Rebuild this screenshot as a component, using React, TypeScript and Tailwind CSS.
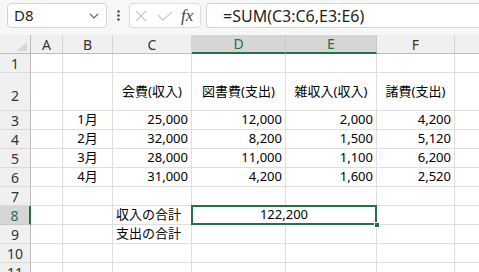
type Align = 'left' | 'center' | 'right';
type CellData = { text: string; align: Align };

const cols = ['A', 'B', 'C', 'D', 'E', 'F', 'G'];
const selectedCols = ['D', 'E'];

const c = (text: string): CellData => ({ text, align: 'center' });
const r = (text: string): CellData => ({ text, align: 'right' });
const l = (text: string): CellData => ({ text, align: 'left' });

// row number -> column letter -> content
const sheet: Record<number, Record<string, CellData>> = {
  2: { C: c('会費(収入)'), D: c('図書費(支出)'), E: c('雑収入(収入)'), F: c('諸費(支出)') },
  3: { B: c('1月'), C: r('25,000'), D: r('12,000'), E: r('2,000'), F: r('4,200') },
  4: { B: c('2月'), C: r('32,000'), D: r('8,200'), E: r('1,500'), F: r('5,120') },
  5: { B: c('3月'), C: r('28,000'), D: r('11,000'), E: r('1,100'), F: r('6,200') },
  6: { B: c('4月'), C: r('31,000'), D: r('4,200'), E: r('1,600'), F: r('2,520') },
  9: { C: l('支出の合計') },
};

const rows = [1, 2, 3, 4, 5, 6, 7, 8, 9, 10, 11];

function NameBox() {
  return (
    <div className="flex h-[25px] w-[100px] items-center justify-between rounded-[4px] border border-[#d4d4d4] bg-white pl-[6px] pr-[6px]">
      <span className="text-[15px] text-[#1f1f1f]">D8</span>
      <svg width="10" height="6" viewBox="0 0 10 6" className="mr-[1px]">
        <polyline points="1,1 5,5 9,1" fill="none" stroke="#666" strokeWidth="1.2" />
      </svg>
    </div>
  );
}

function FormulaBar() {
  return (
    <div className="flex h-[35px] items-start bg-[#f7f7f7] pt-[3px] pl-[7px]">
      <NameBox />
      <div className="flex h-[25px] w-[22px] items-center justify-center">
        <svg width="3" height="11" viewBox="0 0 3 11">
          <circle cx="1.5" cy="1.5" r="1.2" fill="#444" />
          <circle cx="1.5" cy="5.5" r="1.2" fill="#444" />
          <circle cx="1.5" cy="9.5" r="1.2" fill="#444" />
        </svg>
      </div>
      <div className="flex h-[25px] w-[72px] items-center rounded-[4px] border border-[#dcdcdc] bg-white pl-[5px]">
        <svg width="12" height="12" viewBox="0 0 12 12" className="mr-[10px]">
          <path d="M1 1 L11 11 M11 1 L1 11" stroke="#c6c6c6" strokeWidth="1.1" fill="none" />
        </svg>
        <svg width="16" height="10" viewBox="0 0 16 10" className="mr-[8px]">
          <polyline points="1,4 6,9 15,1" stroke="#c6c6c6" strokeWidth="1.1" fill="none" />
        </svg>
        <span className="text-[17px] italic text-[#444] [font-family:'Liberation_Serif',serif]">fx</span>
      </div>
      <div className="ml-[5px] flex h-[25px] flex-1 items-center rounded-l-[4px] border border-r-0 border-[#d4d4d4] bg-white pl-[16px]">
        <span className="text-[16px] text-[#1f1f1f]">=SUM(C3:C6,E3:E6)</span>
      </div>
    </div>
  );
}

function ColHeader({ col }: { col: string }) {
  const sel = selectedCols.includes(col);
  return (
    <div
      className={
        sel
          ? 'flex items-center justify-center border-r border-r-[#c8c8c8] border-b-2 border-b-[#217346] bg-[#d6d6d6] text-[14px] text-[#217346]'
          : 'flex items-center justify-center border-r border-r-[#d4d4d4] border-b border-b-[#bdbdbd] bg-[#f0f0f0] text-[14px] text-[#333]'
      }
    >
      {/* G sits past the window's right edge, its letter is not visible */}
      {col === 'G' ? '' : col}
    </div>
  );
}

function RowHeader({ n }: { n: number }) {
  const sel = n === 8;
  return (
    <div
      className={
        (n === 2 ? 'items-end pb-[4px] ' : 'items-center ') +
        (sel
          ? 'flex justify-center border-b border-b-[#c8c8c8] border-r-2 border-r-[#217346] bg-[#d6d6d6] text-[14px] text-[#217346]'
          : 'flex justify-center border-b border-b-[#d9d9d9] border-r border-r-[#bdbdbd] bg-[#f0f0f0] text-[14px] text-[#333]')
      }
    >
      {n}
    </div>
  );
}

function Cell({ data }: { data?: CellData }) {
  const align =
    data?.align === 'right' ? 'justify-end pr-[3px]' : data?.align === 'left' ? 'justify-start pl-[3px]' : 'justify-center';
  return (
    <div className={`flex items-center overflow-visible whitespace-nowrap border-r border-b border-[#dedede] bg-white text-[13px] text-black ${align}`}>
      {data?.text}
    </div>
  );
}

function RowCells({ n }: { n: number }) {
  return (
    <>
      <RowHeader n={n} />
      {cols.map((col) => (
        <Cell key={col} data={sheet[n]?.[col]} />
      ))}
    </>
  );
}

function Row8() {
  return (
    <>
      <RowHeader n={8} />
      <Cell />
      <Cell />
      <Cell data={l('収入の合計')} />
      <div className="relative col-span-2 flex items-center justify-center border-r border-b border-[#dedede] bg-white text-[13px] text-black">
        122,200
        <div className="absolute -top-[1px] -left-[1px] -right-[1px] -bottom-[1px] border-2 border-[#217346]" />
        <div className="absolute -right-[4px] -bottom-[4px] h-[6px] w-[6px] border border-white bg-[#217346]" />
      </div>
      <Cell />
      <Cell />
    </>
  );
}

function Sheet() {
  return (
    <div className="grid w-[527px] grid-cols-[31px_32px_50px_79px_94px_91px_78px_72px] grid-rows-[19px_19px_38px_repeat(9,19px)]">
      <div className="flex items-end justify-end border-r border-r-[#bdbdbd] border-b border-b-[#bdbdbd] bg-[#f0f0f0] pr-[3px] pb-[2px]">
        <svg width="11" height="9" viewBox="0 0 11 9">
          <polygon points="11,0 11,9 0,9" fill="#d9d9d9" />
        </svg>
      </div>
      {cols.map((col) => (
        <ColHeader key={col} col={col} />
      ))}
      {rows.map((n) => (n === 8 ? <Row8 key={n} /> : <RowCells key={n} n={n} />))}
    </div>
  );
}

export default function App() {
  return (
    <div
      className="h-[272px] w-[479px] overflow-hidden bg-white"
      style={{ fontFamily: "'Noto Sans', 'Noto Sans CJK JP', sans-serif" }}
    >
      <FormulaBar />
      <Sheet />
    </div>
  );
}
